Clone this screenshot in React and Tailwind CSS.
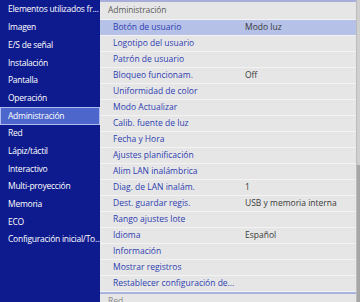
import React from "react";

const sideItems = [
  "Elementos utilizados fr...",
  "Imagen",
  "E/S de señal",
  "Instalación",
  "Pantalla",
  "Operación",
  "Administración",
  "Red",
  "Lápiz/táctil",
  "Interactivo",
  "Multi-proyección",
  "Memoria",
  "ECO",
  "Configuración inicial/To...",
];

const rows = [
  ["Botón de usuario", "Modo luz"],
  ["Logotipo del usuario", ""],
  ["Patrón de usuario", ""],
  ["Bloqueo funcionam.", "Off"],
  ["Uniformidad de color", ""],
  ["Modo Actualizar", ""],
  ["Calib. fuente de luz", ""],
  ["Fecha y Hora", ""],
  ["Ajustes planificación", ""],
  ["Alim LAN inalámbrica", ""],
  ["Diag. de LAN inalám.", "1"],
  ["Dest. guardar regis.", "USB y memoria interna"],
  ["Rango ajustes lote", ""],
  ["Idioma", "Español"],
  ["Información", ""],
  ["Mostrar registros", ""],
  ["Restablecer configuración de...", ""],
];

export default function App() {
  return (
    <div
      className="flex w-[360px] h-[302px] overflow-hidden bg-[#e6e6e6] text-[8.5px]"
      style={{ fontFamily: '"Open Sans", "Noto Sans", sans-serif' }}
    >
      {/* left menu */}
      <div className="w-[100px] shrink-0 bg-[#0e1b8e] pt-px">
        {sideItems.map((item) => (
          <div
            key={item}
            className={`h-[17.7px] flex items-center pl-2 whitespace-nowrap tracking-[-0.25px] text-white ${
              item === "Administración" ? "bg-[#4c66cc] border border-[#aebcf0] pl-[7px]" : ""
            }`}
          >
            {item}
          </div>
        ))}
      </div>

      {/* right panel */}
      <div className="flex-1 flex min-w-0">
        <div className="flex-1 flex flex-col min-w-0">
          <div className="h-[20px] shrink-0 border-t-2 border-[#a9add9] border-b border-b-[#f3f3f3] flex items-center pl-[8px] text-[#5d5d5d] tracking-[-0.1px]">
            Administración
          </div>
          {rows.map(([label, value], i) => (
            <div
              key={label}
              className={`h-[16px] shrink-0 flex items-center border-b border-[#f3f3f3] ${
                i === 0 ? "bg-[#b5c1e7]" : ""
              }`}
            >
              <span className="w-[145px] shrink-0 pl-[13px] text-[#2d3db0] whitespace-nowrap">{label}</span>
              <span className="text-[#3a3a3a] whitespace-nowrap">{value}</span>
            </div>
          ))}
          <div className="h-[2px] shrink-0 bg-[#a9b3df]" />
          <div className="pl-[8px] pt-[1px] text-[#8a8a8a] leading-[12px]">Red</div>
        </div>
        {/* scrollbar */}
        <div className="w-[4px] shrink-0 bg-[#cfcfcf] flex flex-col border-l border-[#bdbdbd]">
          <div className="h-[165px]" />
          <div className="flex-1 bg-[#a6a6a6]" />
        </div>
      </div>
    </div>
  );
}
